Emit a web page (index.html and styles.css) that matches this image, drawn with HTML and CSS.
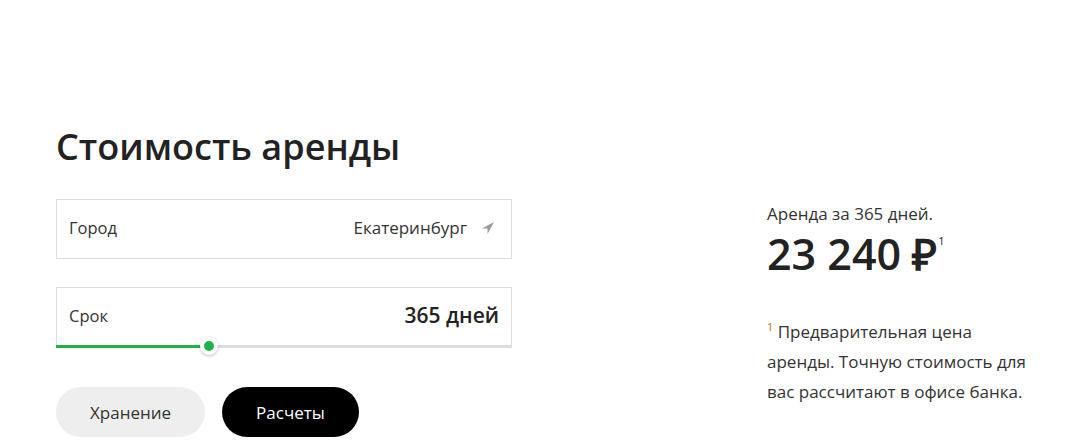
FILE: index.html
```html
<!DOCTYPE html>
<html lang="ru">
<head>
    <meta charset="UTF-8">
    <meta name="viewport" content="width=device-width, initial-scale=1.0">
    <title>Стоимость аренды</title>
    <link rel="stylesheet" href="styles.css">
</head>
<body>
    <div class="calc">
        <div class="calc-form">
            <h1>Стоимость аренды</h1>
            <div class="field">
                <span class="field-label">Город</span>
                <span class="field-value">
                    Екатеринбург
                    <svg class="geo" width="14" height="14" viewBox="0 0 14 14">
                        <path d="M13 1 L1 7.5 L6.5 7.5 L6.5 13 Z" fill="#999"/>
                    </svg>
                </span>
            </div>
            <div class="field field-range">
                <span class="field-label">Срок</span>
                <span class="field-value big">365 дней</span>
                <div class="track">
                    <div class="track-fill" style="width: 153px"></div>
                    <div class="knob"></div>
                </div>
            </div>
            <div class="tabs">
                <button class="tab">Хранение</button>
                <button class="tab active">Расчеты</button>
            </div>
        </div>
        <div class="calc-result">
            <div class="result-caption">Аренда за 365 дней.</div>
            <div class="result-price">23 240 ₽<sup>1</sup></div>
            <p class="note"><sup>1</sup> Предварительная цена аренды. Точную стоимость для вас рассчитают в офисе банка.</p>
        </div>
    </div>
</body>
</html>
```

FILE: styles.css
```css
body {
    margin: 0;
    font-family: "Open Sans", Arial, sans-serif;
    color: #333;
    background: #fff;
}
.calc {
    display: flex;
    padding: 122px 0 0 56px;
}
.calc-form {
    width: 456px;
}
h1 {
    margin: 0 0 27px 0;
    font-size: 36px;
    font-weight: 600;
    line-height: 50px;
    color: #222;
}
.field {
    position: relative;
    display: flex;
    justify-content: space-between;
    align-items: center;
    height: 54px;
    padding: 0 12px 4px 12px;
    border: 1px solid #ddd;
    font-size: 16.5px;
    margin-bottom: 28px;
}
.field-value {
    display: flex;
    align-items: center;
    gap: 14px;
    font-size: 17px;
}
.field-value.big {
    font-size: 21px;
    font-weight: 600;
    color: #222;
}
.geo {
    margin-right: 4px;
    position: relative;
    top: 1px;
}
.field-range {
    border-bottom: none;
    margin-bottom: 41px;
}
.track {
    position: absolute;
    left: -1px;
    right: -1px;
    bottom: -2px;
    height: 3px;
    background: #ddd;
}
.track-fill {
    height: 100%;
    background: #21b14b;
}
.knob {
    position: absolute;
    left: 144px;
    top: -8px;
    width: 10px;
    height: 10px;
    border: 4px solid #fff;
    border-radius: 50%;
    background: #21b14b;
    box-shadow: 0 1px 3px rgba(0,0,0,0.25);
}
.tabs {
    display: flex;
    gap: 17px;
}
.tab {
    height: 50px;
    padding: 0 34px;
    border: none;
    border-radius: 25px;
    background: #eee;
    color: #333;
    font-family: inherit;
    font-size: 17px;
    cursor: pointer;
}
.tab.active {
    background: #000;
    color: #fff;
}
.calc-result {
    margin-left: 255px;
    padding-top: 80px;
    width: 270px;
}
.result-caption {
    font-size: 17px;
    line-height: 24px;
}
.result-price {
    font-size: 43px;
    font-weight: 600;
    line-height: 56px;
    color: #222;
}
.result-price sup {
    font-size: 11px;
    font-weight: 400;
    line-height: 1;
    vertical-align: top;
    position: relative;
    top: 9px;
    margin-left: 1px;
}
.note {
    margin: 35px 0 0 0;
    font-size: 17px;
    line-height: 30px;
}
.note sup {
    font-size: 11px;
    line-height: 0;
    color: #c76b00;
}
```
